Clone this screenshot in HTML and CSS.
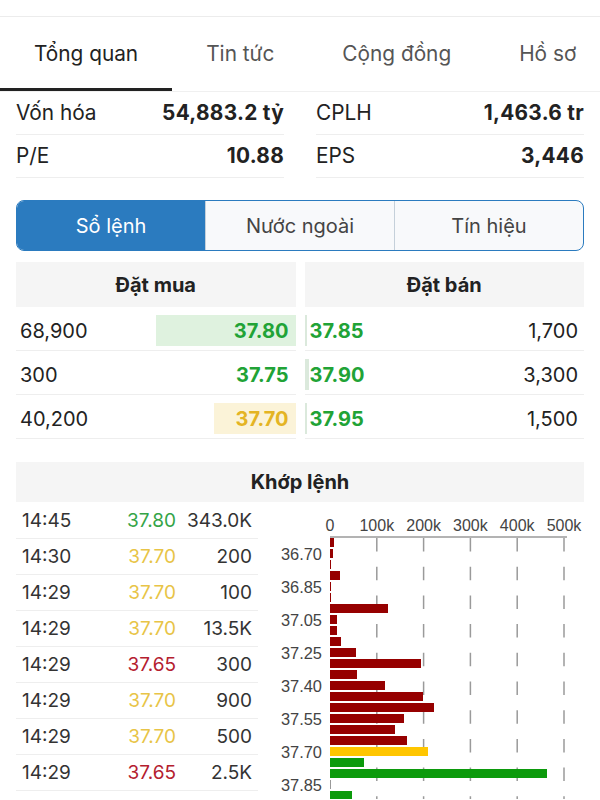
FILE: index.html
```html
<!DOCTYPE html>
<html lang="vi">
<head>
<meta charset="utf-8">
<title>Tổng quan</title>
<link rel="stylesheet" href="styles.css">
</head>
<body>
<div class="statusline"></div>
<nav class="tabs">
  <div class="tab active">Tổng quan</div>
  <div class="tab">Tin tức</div>
  <div class="tab">Cộng đồng</div>
  <div class="tab">Hồ sơ</div>
</nav>

<section class="stats">
  <div class="stat"><span>Vốn hóa</span><span class="val">54,883.2 tỷ</span></div>
  <div class="stat"><span>CPLH</span><span class="val">1,463.6 tr</span></div>
  <div class="stat"><span>P/E</span><span class="val">10.88</span></div>
  <div class="stat"><span>EPS</span><span class="val">3,446</span></div>
</section>

<div class="segmented">
  <div class="seg selected">Sổ lệnh</div>
  <div class="seg">Nước ngoài</div>
  <div class="seg">Tín hiệu</div>
</div>

<section class="book">
  <div class="book-col">
    <div class="book-head">Đặt mua</div>
    <div class="book-row buy"><span class="vbar vbar-green" style="width:140px"></span><span class="qty">68,900</span><span class="px up">37.80</span></div>
    <div class="book-row buy"><span class="qty">300</span><span class="px up">37.75</span></div>
    <div class="book-row buy"><span class="vbar vbar-yellow" style="width:82px"></span><span class="qty">40,200</span><span class="px ref">37.70</span></div>
  </div>
  <div class="book-col">
    <div class="book-head">Đặt bán</div>
    <div class="book-row sell"><span class="vbar vbar-sell" style="width:2px"></span><span class="px up">37.85</span><span class="qty">1,700</span></div>
    <div class="book-row sell"><span class="vbar vbar-sell" style="width:4px"></span><span class="px up">37.90</span><span class="qty">3,300</span></div>
    <div class="book-row sell"><span class="vbar vbar-sell" style="width:2px"></span><span class="px up">37.95</span><span class="qty">1,500</span></div>
  </div>
</section>

<div class="match-head">Khớp lệnh</div>
<section class="match">
  <div class="trades">
    <div class="trade"><span class="t">14:45</span><span class="p green">37.80</span><span class="v">343.0K</span></div>
    <div class="trade"><span class="t">14:30</span><span class="p yellow">37.70</span><span class="v">200</span></div>
    <div class="trade"><span class="t">14:29</span><span class="p yellow">37.70</span><span class="v">100</span></div>
    <div class="trade"><span class="t">14:29</span><span class="p yellow">37.70</span><span class="v">13.5K</span></div>
    <div class="trade"><span class="t">14:29</span><span class="p red">37.65</span><span class="v">300</span></div>
    <div class="trade"><span class="t">14:29</span><span class="p yellow">37.70</span><span class="v">900</span></div>
    <div class="trade"><span class="t">14:29</span><span class="p yellow">37.70</span><span class="v">500</span></div>
    <div class="trade"><span class="t">14:29</span><span class="p red">37.65</span><span class="v">2.5K</span></div>
  </div>
  <svg class="chart" width="320" height="297" viewBox="0 0 320 297">
    <g class="ticks">
      <text x="60" y="23">0</text>
      <text x="106.8" y="23">100k</text>
      <text x="153.6" y="23">200k</text>
      <text x="200.4" y="23">300k</text>
      <text x="247.2" y="23">400k</text>
      <text x="294" y="23">500k</text>
    </g>
    <g class="grid">
      <line x1="106.8" y1="36" x2="106.8" y2="297"/>
      <line x1="153.6" y1="36" x2="153.6" y2="297"/>
      <line x1="200.4" y1="36" x2="200.4" y2="297"/>
      <line x1="247.2" y1="36" x2="247.2" y2="297"/>
      <line x1="294" y1="36" x2="294" y2="297"/>
    </g>
    <line class="axis" x1="60" y1="35" x2="297" y2="35"/>
    <g class="bars-red">
      <rect x="60" y="36" width="4" height="9"/>
      <rect x="60" y="47" width="3" height="9"/>
      <rect x="60" y="58" width="1" height="9"/>
      <rect x="60" y="69" width="10" height="9"/>
      <rect x="60" y="80" width="1" height="9"/>
      <rect x="60" y="91" width="1" height="9"/>
      <rect x="60" y="102" width="58" height="9"/>
      <rect x="60" y="113" width="7" height="9"/>
      <rect x="60" y="124" width="7" height="9"/>
      <rect x="60" y="135" width="11" height="9"/>
      <rect x="60" y="146" width="26" height="9"/>
      <rect x="60" y="157" width="91" height="9"/>
      <rect x="60" y="168" width="27" height="9"/>
      <rect x="60" y="179" width="55" height="9"/>
      <rect x="60" y="190" width="93" height="9"/>
      <rect x="60" y="201" width="104" height="9"/>
      <rect x="60" y="212" width="74" height="9"/>
      <rect x="60" y="223" width="65" height="9"/>
      <rect x="60" y="234" width="77" height="9"/>
    </g>
    <rect class="bar-yellow" x="60" y="245" width="98" height="9"/>
    <g class="bars-green">
      <rect x="60" y="256" width="34" height="9"/>
      <rect x="60" y="267" width="217" height="9"/>
      <rect x="60" y="289" width="22" height="9"/>
    </g>
    <rect class="bar-gray" x="60" y="278" width="1" height="9"/>
    <g class="ylabels">
      <text x="52" y="51.5">36.70</text>
      <text x="52" y="84.5">36.85</text>
      <text x="52" y="117.5">37.05</text>
      <text x="52" y="150.5">37.25</text>
      <text x="52" y="183.5">37.40</text>
      <text x="52" y="216.5">37.55</text>
      <text x="52" y="249.5">37.70</text>
      <text x="52" y="282.5">37.85</text>
    </g>
  </svg>
</section>
</body>
</html>
```

FILE: styles.css
```css
* { box-sizing: border-box; }

html, body {
  margin: 0;
  padding: 0;
}

body {
  width: 600px;
  height: 800px;
  overflow: hidden;
  background: #fff;
  color: #222;
  font-family: Inter, "Liberation Sans", sans-serif;
}

.statusline {
  height: 17px;
  border-bottom: 1px solid #ececec;
}

/* top tabs */
.tabs {
  display: flex;
  height: 75px;
  overflow: hidden;
  white-space: nowrap;
  border-bottom: 1px solid #f0f0f0;
}

.tab {
  flex: none;
  display: flex;
  align-items: center;
  padding: 2px 34px 0;
  font-size: 20.8px;
  color: #555;
  border-bottom: 3px solid transparent;
}

.tab.active {
  color: #222;
  border-bottom-color: #222;
}

/* stats */
.stats {
  display: grid;
  grid-template-columns: 1fr 1fr;
  column-gap: 32px;
  padding: 0 16px;
}

.stat {
  display: flex;
  justify-content: space-between;
  align-items: center;
  height: 43px;
  padding-bottom: 2px;
  border-bottom: 1px solid #eee;
  font-size: 20.8px;
  color: #222;
}

.stat .val {
  font-weight: 700;
  letter-spacing: 0.3px;
}

/* segmented control */
.segmented {
  display: flex;
  margin: 22px 16px 0;
  height: 51px;
  border: 1.5px solid #2b7bbf;
  border-radius: 8px;
  overflow: hidden;
  background: #f8f9fb;
}

.seg {
  flex: 1;
  display: flex;
  align-items: center;
  justify-content: center;
  font-size: 20px;
  color: #444;
  border-left: 1px solid #c5d0da;
}

.seg:first-child {
  border-left: none;
}

.seg.selected {
  background: #2b7bbf;
  color: #fff;
}

/* order book */
.book {
  display: grid;
  grid-template-columns: 1fr 1fr;
  column-gap: 9px;
  padding: 0 16px;
  margin-top: 11px;
}

.book-head {
  height: 45px;
  background: #f5f5f5;
  display: flex;
  align-items: center;
  justify-content: center;
  font-size: 20px;
  font-weight: 700;
}

.book-row {
  position: relative;
  display: flex;
  justify-content: space-between;
  align-items: center;
  height: 44px;
  padding-top: 4px;
  border-bottom: 1px solid #eee;
  font-size: 20px;
}

.book-row.buy {
  padding-left: 4px;
  padding-right: 7px;
}

.book-row.sell {
  padding-left: 5px;
  padding-right: 6px;
}

.book-row > span {
  position: relative;
}

.book-row > .vbar {
  position: absolute;
  top: 8px;
  height: 31px;
}

.buy .vbar { right: 0; }
.sell .vbar { left: 0; }

.vbar-green { background: #dff2df; }
.vbar-yellow { background: #fbf3d8; }
.vbar-sell { background: #dbe9dc; }

.px {
  font-weight: 700;
}

.px.up { color: #21a336; }
.px.ref { color: #e4b423; }

/* match list */
.match-head {
  margin: 23px 16px 0;
  height: 40px;
  background: #f5f5f5;
  display: flex;
  align-items: center;
  justify-content: center;
  font-size: 20px;
  font-weight: 700;
}

.match {
  display: flex;
  align-items: flex-start;
}

.trades {
  width: 242px;
  margin-left: 16px;
  padding-top: 1px;
}

.trade {
  display: grid;
  grid-template-columns: 1fr 70px 76px;
  align-items: center;
  height: 36px;
  padding: 0 6px;
  border-bottom: 1px solid #eee;
  font-size: 19px;
  color: #333;
}

.trade .p, .trade .v { text-align: right; }

.p.green { color: #34a447; }
.p.yellow { color: #e8c447; }
.p.red { color: #b4202e; }

.chart {
  display: block;
  margin-left: 12px;
  font-family: "Liberation Sans", Arial, sans-serif;
}

.ticks text {
  font-size: 16px;
  fill: #444;
  text-anchor: middle;
  dominant-baseline: central;
}

.ylabels text {
  font-size: 16.4px;
  fill: #444;
  text-anchor: end;
  dominant-baseline: central;
}

.grid line {
  stroke: #9a9a9a;
  stroke-width: 1.5;
  stroke-dasharray: 13.5 15.2;
}

.axis {
  stroke: #9a9a9a;
  stroke-width: 1.5;
}

.bars-red rect { fill: #960000; }
.bar-yellow { fill: #ffc600; }
.bars-green rect { fill: #0c9a0c; }
.bar-gray { fill: #999; }
```
